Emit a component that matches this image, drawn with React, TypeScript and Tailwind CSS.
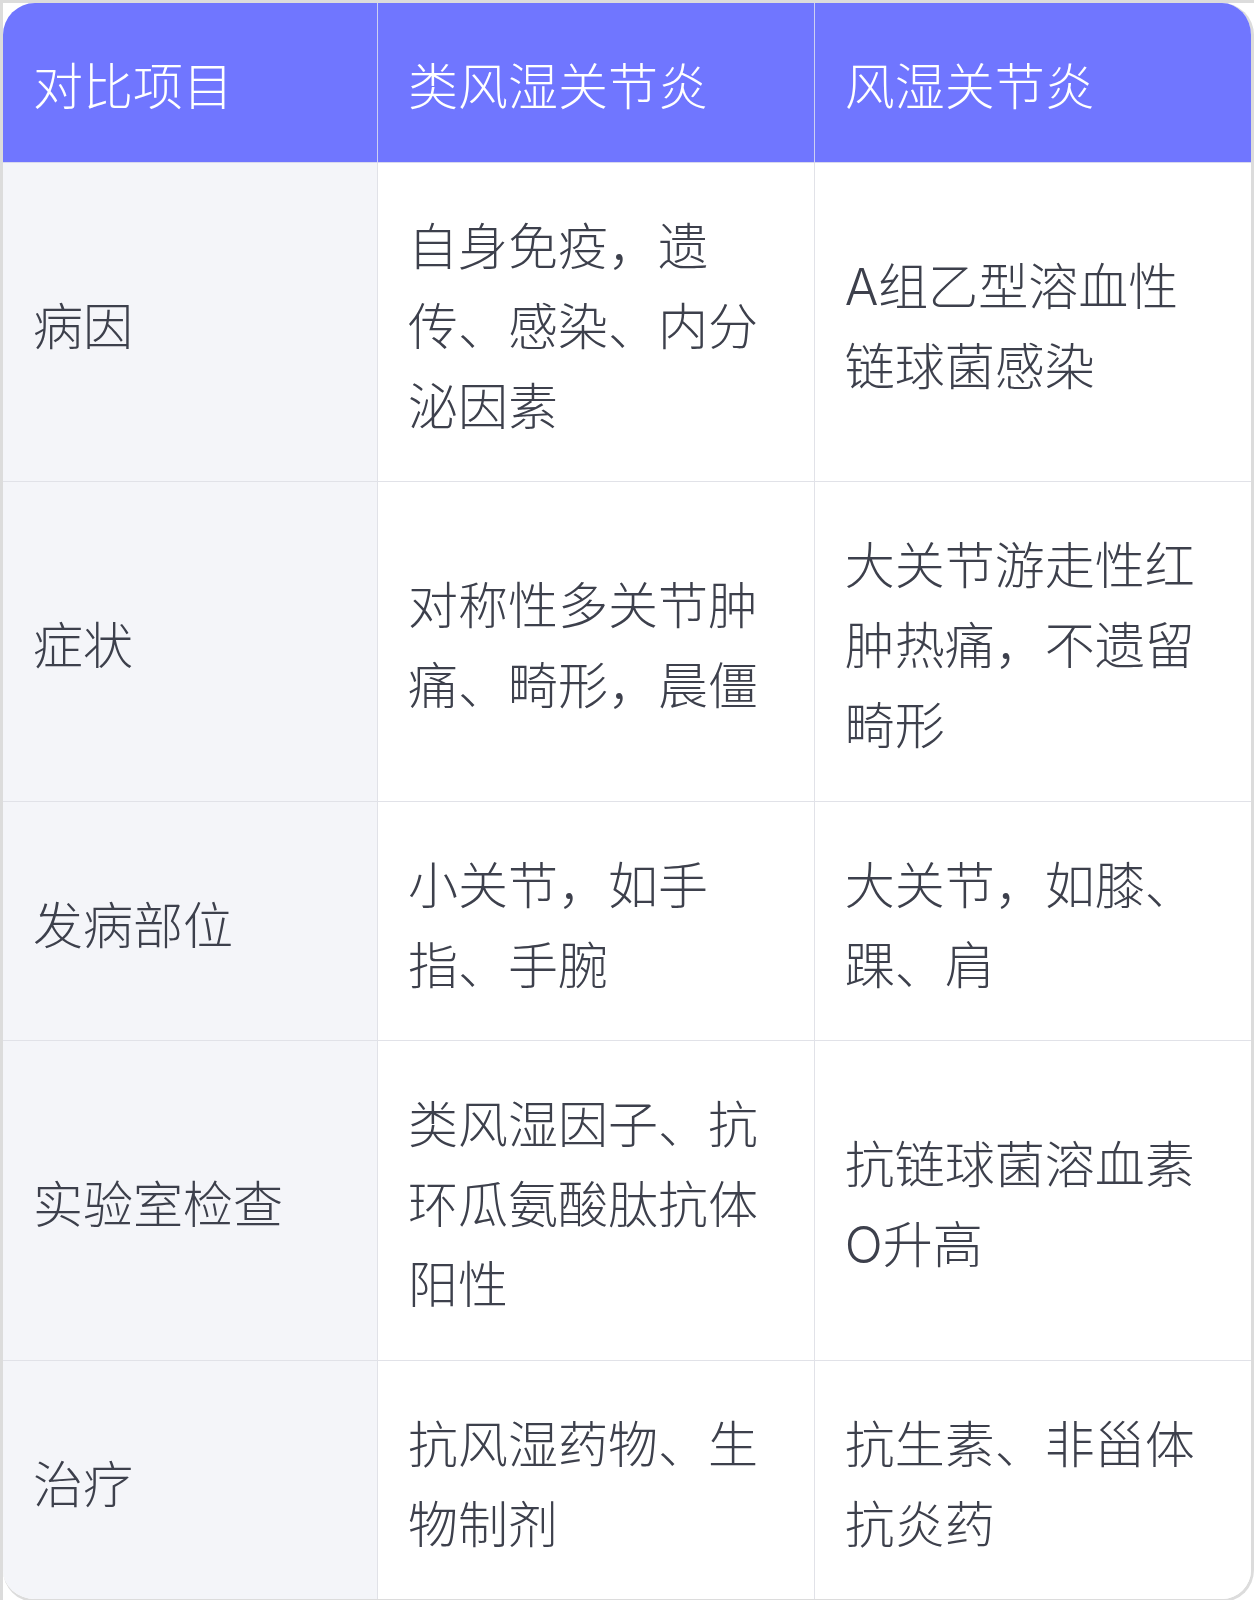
const headers = ["对比项目", "类风湿关节炎", "风湿关节炎"];

const rows = [
  ["病因", "自身免疫，遗传、感染、内分泌因素", "A组乙型溶血性链球菌感染"],
  ["症状", "对称性多关节肿痛、畸形，晨僵", "大关节游走性红肿热痛，不遗留畸形"],
  ["发病部位", "小关节，如手指、手腕", "大关节，如膝、踝、肩"],
  ["实验室检查", "类风湿因子、抗环瓜氨酸肽抗体阳性", "抗链球菌溶血素O升高"],
  ["治疗", "抗风湿药物、生物制剂", "抗生素、非甾体抗炎药"],
];

export default function App() {
  return (
    <div
      className="w-[1254px] h-[1600px] bg-white border-t-[3px] border-l-[3px] border-[#dcdcdc]"
      style={{ fontFamily: '"Inter", "Noto Sans CJK SC", sans-serif' }}
    >
      <div className="overflow-hidden rounded-[32px] border-r-[3px] border-b-[3px] border-[#dcdcdc] bg-white">
        <table className="w-full table-fixed border-collapse">
          <colgroup>
            <col className="w-[30%]" />
            <col className="w-[35%]" />
            <col className="w-[35%]" />
          </colgroup>
          <thead>
            <tr className="bg-[#7076ff]">
              {headers.map((h, i) => (
                <th
                  key={h}
                  className={
                    "px-[30px] pt-[44px] pb-[34.5px] text-left align-middle text-[50px] font-light leading-[80px] text-white border-b border-[#d8d9ee] " +
                    (i < 2 ? "border-r border-r-[#cdd0f3]" : "")
                  }
                >
                  {h}
                </th>
              ))}
            </tr>
          </thead>
          <tbody>
            {rows.map((row, r) => (
              <tr key={row[0]}>
                {row.map((cell, i) => (
                  <td
                    key={i}
                    className={
                      "px-[30px] pt-[44px] pb-[34.5px] align-middle text-[50px] font-light leading-[80px] text-[#3d404c] border-[#e1e2e8] " +
                      (i === 0 ? "bg-[#f4f5f9] " : "bg-white ") +
                      (i < 2 ? "border-r " : "") +
                      (r < rows.length - 1 ? "border-b" : "")
                    }
                  >
                    {cell}
                  </td>
                ))}
              </tr>
            ))}
          </tbody>
        </table>
      </div>
    </div>
  );
}
